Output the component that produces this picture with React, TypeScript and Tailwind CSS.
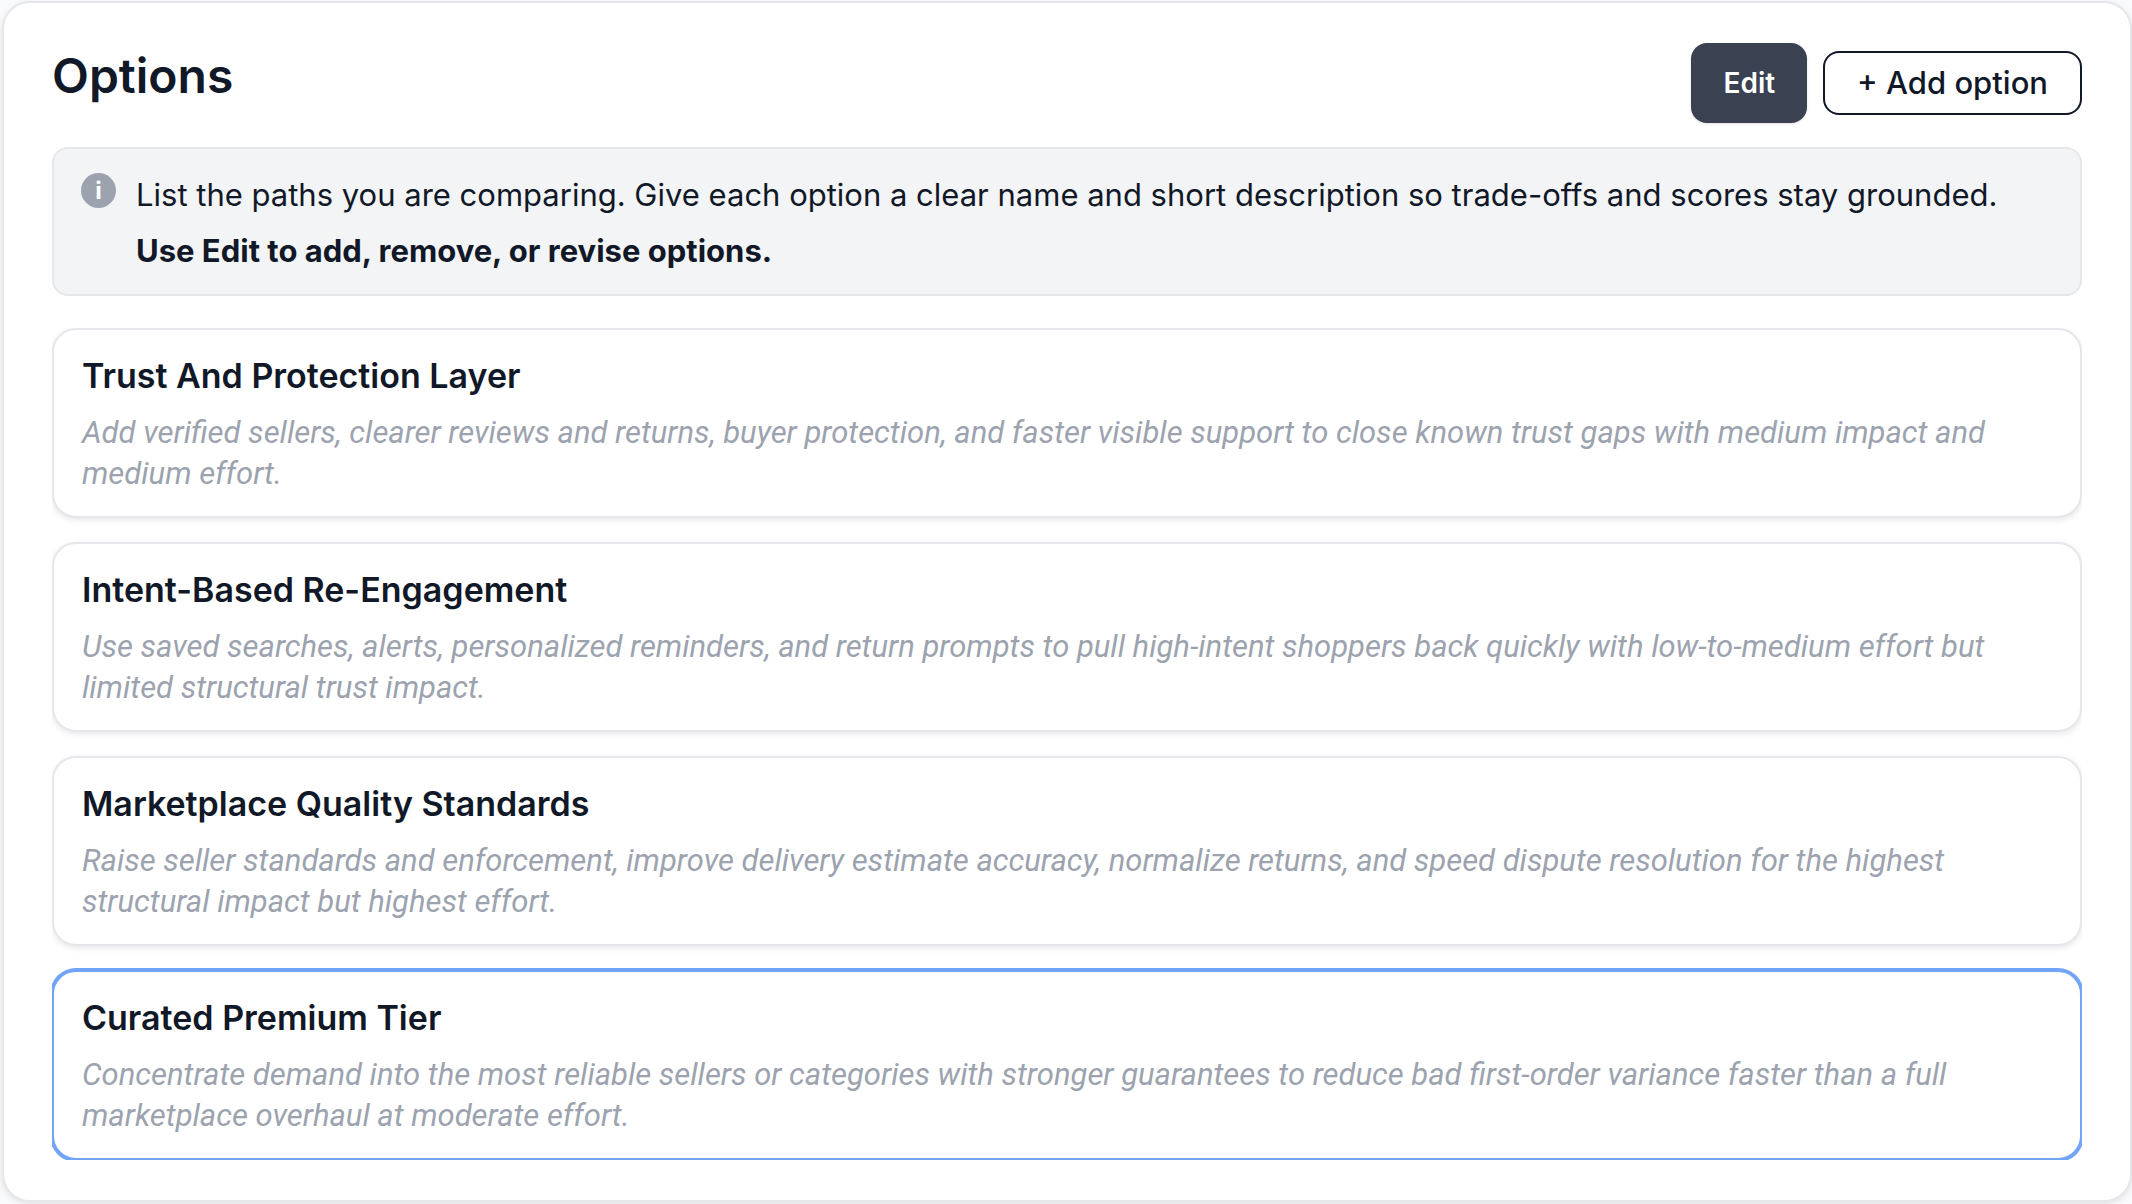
import React from "react";

interface Option {
  id: number;
  name: string;
  description: string;
}

const options: Option[] = [
  {
    id: 1,
    name: "Trust And Protection Layer",
    description:
      "Add verified sellers, clearer reviews and returns, buyer protection, and faster visible support to close known trust gaps with medium impact and medium effort.",
  },
  {
    id: 2,
    name: "Intent-Based Re-Engagement",
    description:
      "Use saved searches, alerts, personalized reminders, and return prompts to pull high-intent shoppers back quickly with low-to-medium effort but limited structural trust impact.",
  },
  {
    id: 3,
    name: "Marketplace Quality Standards",
    description:
      "Raise seller standards and enforcement, improve delivery estimate accuracy, normalize returns, and speed dispute resolution for the highest structural impact but highest effort.",
  },
  {
    id: 4,
    name: "Curated Premium Tier",
    description:
      "Concentrate demand into the most reliable sellers or categories with stronger guarantees to reduce bad first-order variance faster than a full marketplace overhaul at moderate effort.",
  },
];

const OptionCard: React.FC<{ option: Option; selected: boolean }> = ({ option, selected }) => (
  <li
    className={`rounded-3xl border-2 bg-white px-7 pt-6 pb-5.5 ${
      selected
        ? "border-[#72a4f7] ring-2 ring-[#72a4f7]"
        : "border-gray-200 shadow-[0_2px_6px_rgba(0,0,0,0.1)]"
    }`}
  >
    <h3 className="mb-3.5 text-[34px] leading-[44px] font-semibold">{option.name}</h3>
    <p className="font-['Roboto',sans-serif] text-[31px] leading-[41px] text-[#9ca3af] italic">{option.description}</p>
  </li>
);

const App: React.FC = () => {
  const selectedId = 4;

  return (
    <div className="min-h-screen bg-gray-50 pt-px pl-0.5 font-['Inter',sans-serif] text-[#111827]">
      <section className="rounded-[28px] border-2 border-gray-200 bg-white px-12 py-10 shadow-[0_2px_6px_rgba(0,0,0,0.1)]">
        {/* Header */}
        <div className="mb-6 flex items-start justify-between">
          <h2 className="text-5xl leading-[66px] font-semibold">Options</h2>
          <div className="flex items-center gap-4">
            <button
              type="button"
              className="h-20 rounded-2xl bg-[#3a4150] px-8 text-[28px] font-semibold text-white shadow-sm"
            >
              Edit
            </button>
            <button
              type="button"
              className="h-16 rounded-2xl border-2 border-[#111827] bg-white px-8 text-[31px] font-medium"
            >
              + Add option
            </button>
          </div>
        </div>

        {/* Hint */}
        <div className="mb-8 flex gap-5 rounded-2xl border-2 border-gray-200 bg-gray-100 px-[27px] pt-4.5 pb-[15px]">
          <span className="mt-1.5 flex size-[35px] shrink-0 items-center justify-center rounded-full bg-[#9ca3af] text-2xl font-bold text-white">
            i
          </span>
          <div className="text-[31px] leading-[56px]">
            <p>
              List the paths you are comparing. Give each option a clear name and short description so trade-offs and
              scores stay grounded.
            </p>
            <p className="font-bold">Use Edit to add, remove, or revise options.</p>
          </div>
        </div>

        {/* The list clips the outer ring of the selected card */}
        <ul className="flex flex-col gap-6 overflow-hidden">
          {options.map((o) => (
            <OptionCard key={o.id} option={o} selected={o.id === selectedId} />
          ))}
        </ul>
      </section>
    </div>
  );
};

export default App;
